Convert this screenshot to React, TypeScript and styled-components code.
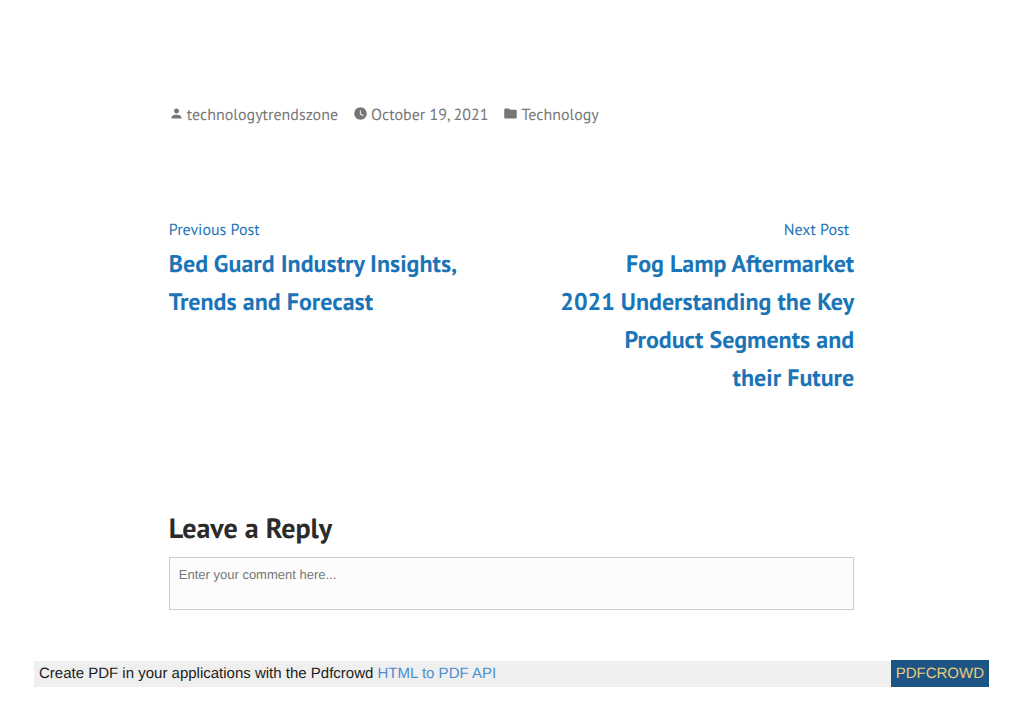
import React from 'react';
import styled, { createGlobalStyle } from 'styled-components';

const GlobalStyle = createGlobalStyle`
  *, *::before, *::after { box-sizing: border-box; }
  body {
    margin: 0;
    background: #fff;
    color: #2b2b2b;
    font-family: "PT Sans", Lato, "Noto Sans", sans-serif;
    text-rendering: geometricPrecision;
  }
`;

const Article = styled.main`
  width: 67%;
  margin: 0 auto;
  padding-top: 103px;
`;

const EntryMeta = styled.footer`
  display: flex;
  flex-wrap: wrap;
  gap: 15px;
  color: #767676;
  font-size: 16px;
  line-height: 24px;
`;

const MetaItem = styled.span`
  display: flex;
  align-items: center;
  gap: 3px;
`;

const MetaLink = styled.a`
  color: inherit;
  text-decoration: none;
`;

const MetaIcon = styled.svg`
  width: 15px;
  height: 15px;
  margin-bottom: 4px;
  fill: currentColor;
`;

const PostNavigation = styled.nav`
  display: flex;
  justify-content: space-between;
  margin-top: 91px;
`;

const PostLink = styled.a<{ $end?: boolean }>`
  width: 44%;
  color: #1a75b8;
  text-align: ${({ $end }) => ($end ? 'right' : 'left')};
  text-decoration: none;
`;

const LinkLabel = styled.span<{ $end?: boolean }>`
  display: block;
  padding-right: ${({ $end }) => ($end ? '5px' : '0')};
  font-size: 16px;
  line-height: 24px;
`;

const LinkTitle = styled.span`
  display: block;
  margin-top: 3px;
  font-size: 24px;
  font-weight: 700;
  line-height: 38px;
`;

const ReplyForm = styled.form`
  margin-top: 114px;
`;

const ReplyTitle = styled.h3`
  margin: 0 0 12px;
  font-size: 28px;
  font-weight: 700;
  line-height: 34px;
`;

const CommentBox = styled.textarea`
  display: block;
  width: 100%;
  height: 53px;
  padding: 9px;
  border: 1px solid #ccc;
  border-radius: 0;
  background: #fcfcfc;
  color: #2b2b2b;
  font-family: "Liberation Sans", Arial, sans-serif;
  font-size: 13px;
  line-height: 16px;
  text-rendering: inherit;
  resize: none;

  &::placeholder { color: #767676; opacity: 1; }
`;

const PromoBar = styled.aside`
  display: flex;
  align-items: stretch;
  justify-content: space-between;
  margin: 50px 34px 0;
  font-family: "Liberation Sans", Arial, sans-serif;
  font-size: 15px;
  line-height: 27px;
`;

const PromoText = styled.p`
  flex: 1;
  margin: 1px 0 0;
  padding-left: 5px;
  background: #efefef;
  color: #1c1c1c;
  line-height: 26px;
`;

const PromoLink = styled.a`
  color: #4a90d0;
  text-decoration: none;
`;

const PromoBrand = styled.a`
  padding: 0 5px;
  background: #1c5583;
  color: #edca7c;
  text-decoration: none;
`;

export default function App() {
  return (
    <>
      <GlobalStyle />
      <Article>
        <EntryMeta>
          <MetaItem>
            <MetaIcon viewBox="0 0 24 24" aria-hidden="true">
              <path d="M12 12c2.2 0 4-1.8 4-4s-1.8-4-4-4-4 1.800-4 4 1.800 4 4 4zm0 2c-2.700 0-8 1.300-8 4v2h16v-2c0-2.700-5.300-4-8-4z" />
            </MetaIcon>
            <MetaLink href="#author">technologytrendszone</MetaLink>
          </MetaItem>
          <MetaItem>
            <MetaIcon viewBox="0 0 24 24" aria-hidden="true">
              <path fillRule="evenodd" d="M12 2C6.500 2 2 6.500 2 12s4.500 10 10 10 10-4.500 10-10S17.500 2 12 2zm4.200 14.200L11 13V7h1.500v5.200l4.500 2.700-.8 1.300z" />
            </MetaIcon>
            <MetaLink href="#date"><time dateTime="2021-10-19">October 19, 2021</time></MetaLink>
          </MetaItem>
          <MetaItem>
            <MetaIcon viewBox="0 0 24 24" aria-hidden="true">
              <path d="M10 4H4c-1.100 0-2 .9-2 2v12c0 1.100.9 2 2 2h16c1.100 0 2-.9 2-2V8c0-1.100-.9-2-2-2h-8l-2-2z" />
            </MetaIcon>
            <MetaLink href="#technology">Technology</MetaLink>
          </MetaItem>
        </EntryMeta>

        <PostNavigation aria-label="Posts">
          <PostLink href="#previous">
            <LinkLabel>Previous Post</LinkLabel>
            <LinkTitle>Bed Guard Industry Insights, Trends and Forecast</LinkTitle>
          </PostLink>
          <PostLink href="#next" $end>
            <LinkLabel $end>Next Post</LinkLabel>
            <LinkTitle>Fog Lamp Aftermarket 2021&nbsp;Understanding the Key Product Segments and their&nbsp;Future</LinkTitle>
          </PostLink>
        </PostNavigation>

        <ReplyForm>
          <ReplyTitle><label htmlFor="comment">Leave a Reply</label></ReplyTitle>
          <CommentBox id="comment" placeholder="Enter your comment here..." />
        </ReplyForm>
      </Article>

      <PromoBar>
        <PromoText>
          Create PDF in your applications with the Pdfcrowd{' '}
          <PromoLink href="#api">HTML to PDF API</PromoLink>
        </PromoText>
        <PromoBrand href="#pdfcrowd">PDFCROWD</PromoBrand>
      </PromoBar>
    </>
  );
}
